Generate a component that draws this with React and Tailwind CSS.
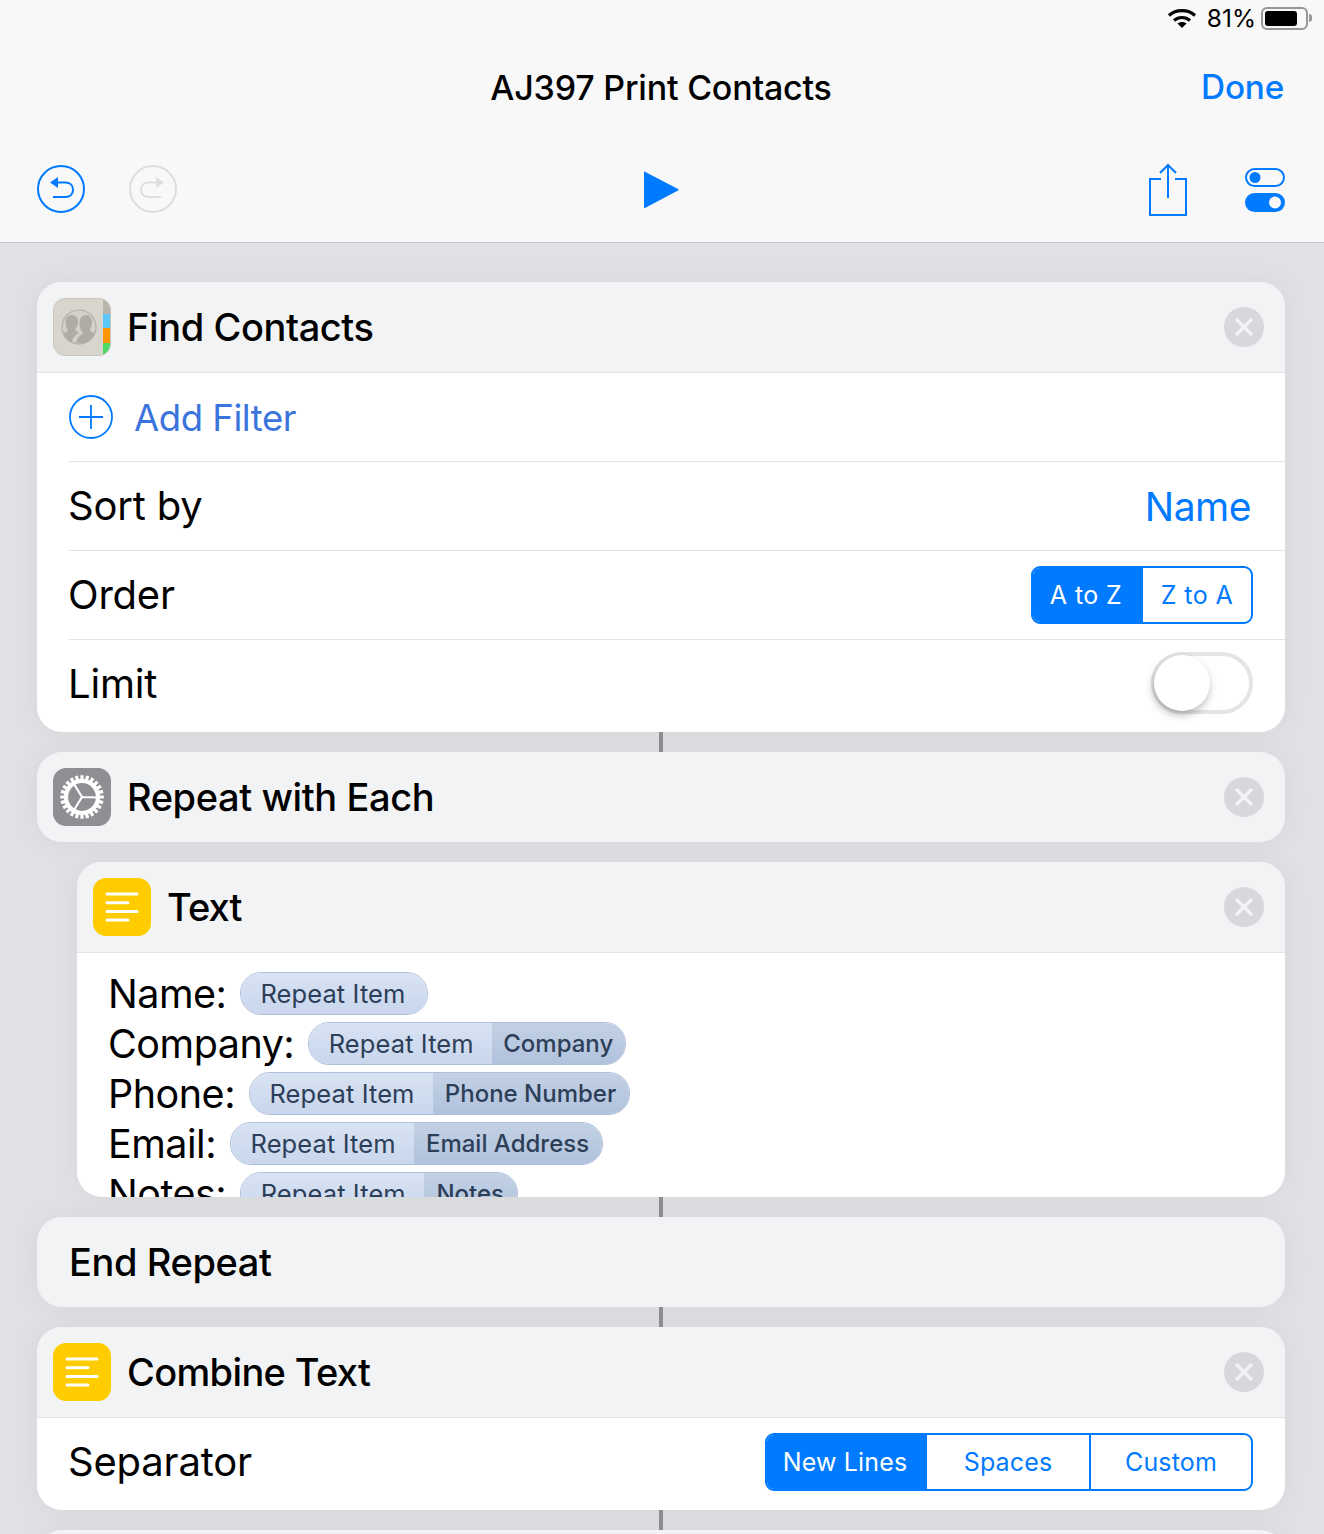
const F = '"Inter", "Liberation Sans", sans-serif';
const CARD_SHADOW = "shadow-[0_0_28px_rgba(0,0,0,0.05)]";

function Close() {
  return (
    <div className="w-10 h-10 rounded-full bg-[#d6d8dc] flex items-center justify-center shrink-0">
      <svg width="20" height="20" viewBox="0 0 20 20"><path d="M3 3L17 17M17 3L3 17" stroke="#f2f3f5" strokeWidth="3.4" strokeLinecap="round" /></svg>
    </div>
  );
}

function TextIcon() {
  return (
    <div className="w-[58px] h-[58px] rounded-[13px] bg-[#ffcc00] shrink-0 flex items-center justify-center">
      <svg width="34" height="32" viewBox="0 0 34 32" fill="none" stroke="#fff" strokeWidth="3" strokeLinecap="round">
        <path d="M2 3H32M2 11.700H23M2 20.400H32M2 29H23" />
      </svg>
    </div>
  );
}

function ContactsIcon() {
  return (
    <div className="w-[58px] h-[58px] rounded-[12px] overflow-hidden shrink-0 flex border border-[#c9c6bd] bg-[#d8d5cc]">
      <div className="flex-1 flex items-center justify-center">
        <svg width="38" height="38" viewBox="0 0 38 38">
          <defs><clipPath id="cc"><circle cx="19" cy="19" r="17" /></clipPath></defs>
          <circle cx="19" cy="19" r="17" fill="#d3d0c8" stroke="#b3afa7" strokeWidth="1.2" />
          <g clipPath="url(#cc)" fill="#b0aca4">
            <path d="M12 7c4 0 6 3 6 7 0 3-1 5-2.500 7 0 2 1.500 2.500 4 3.500-4 2-7 5-7.500 10H0c0-6 2-9 8-11.500 0-1-.5-1.500-1-2.500-1-2-1.500-4-1.500-6.500C5.500 10 8 7 12 7z" />
            <path d="M26 7c4 0 6 3 6 7 0 3-.5 5-2 7.500 0 2 2 2.500 5 4l3 9.500H16c.5-4 2.500-7 6.500-9 0-1 0-2-.5-2.500-2-2-2.500-5-2.500-8C19.500 10 22 7 26 7z" />
          </g>
        </svg>
      </div>
      <div className="w-[7px] flex flex-col bg-[#b8b5ac] shrink-0">
        <div className="h-[15px]" />
        <div className="h-[14px] bg-[#5ac8fa]" />
        <div className="h-[15px] bg-[#ff9500]" />
        <div className="flex-1 bg-[#4cd964]" />
      </div>
    </div>
  );
}

function GearIcon() {
  const teeth = [];
  for (let i = 0; i < 24; i++) teeth.push(i * 15);
  return (
    <div className="w-[58px] h-[58px] rounded-[13px] bg-[#8e8e93] shrink-0 flex items-center justify-center">
      <svg width="46" height="46" viewBox="0 0 46 46" fill="none" stroke="#fff">
        <circle cx="23" cy="23" r="16" strokeWidth="4.2" />
        {teeth.map((a) => (
          <path key={a} d="M23 1.200V8" strokeWidth="3.200" transform={`rotate(${a} 23 23)`} />
        ))}
        <path d="M23 23L38 23.500M23 23L15 10M23 23L15 36" strokeWidth="2.200" />
      </svg>
    </div>
  );
}

function CardHeader({ icon, title, close = true, bordered = true, tracking = "tracking-[-0.4px]" }) {
  return (
    <div className={`bg-[#f2f3f5] flex items-center pl-4 pr-[21px] ${bordered ? "h-[91px] border-b border-[#e2e3e5]" : "h-[90px]"}`}>
      {icon}
      <div className={`flex-1 ml-[16px] text-[38px] font-medium text-black leading-none ${tracking}`}>{title}</div>
      {close && <Close />}
    </div>
  );
}

function Row({ label, children, last, h = "h-[89px]", pad = "" }) {
  return (
    <div className={`ml-8 pr-8 flex items-center justify-between ${h} ${pad} ${last ? "" : "border-b border-[#e2e2e4]"}`}>
      <div className="-ml-px text-[40px] text-black tracking-[-0.2px] leading-none">{label}</div>
      {children}
    </div>
  );
}

function Connector() {
  return (
    <div className="h-5 flex justify-center">
      <div className="w-1 h-full bg-[#8e8e93]" />
    </div>
  );
}

function Seg({ items, w, textClass }) {
  return (
    <div className="flex h-[58px] border-2 border-[#007aff] rounded-[9px] overflow-hidden bg-white">
      {items.map((t, i) => (
        <div
          key={t}
          style={{ width: w[i] }}
          className={`flex items-center justify-center text-[25px] leading-none ${textClass} ${i === 0 ? "bg-[#007aff] text-white pr-[4px]" : "text-[#007aff]"} ${i > 1 ? "border-l-2 border-[#007aff]" : ""}`}
        >
          {t}
        </div>
      ))}
    </div>
  );
}

function Line({ label, second, sw }) {
  return (
    <div className="h-[50px] flex items-center">
      <span className="mt-[3px] text-[39.500px] text-black tracking-[-0.5px] leading-none">{label}</span>
      <div className="ml-[13.500px] h-[43px] flex rounded-[21px] border border-[#afc0dc] overflow-hidden leading-none text-[#2d3e58]">
        <div className={`h-full flex items-center justify-center bg-gradient-to-b from-[#d8e3f3] to-[#c9d6ec] text-[25.500px] tracking-[0.1px] ${second ? "w-[183px] pl-[2px]" : "w-[186px] pr-[2px]"}`}>
          Repeat Item
        </div>
        {second && (
          <div className="h-full flex items-center justify-center bg-gradient-to-b from-[#c3d1e4] to-[#b0c2dc] text-[24px] font-medium" style={{ width: sw }}>
            {second}
          </div>
        )}
      </div>
    </div>
  );
}

export default function App() {
  return (
    <div className="w-[1324px] h-[1534px] overflow-hidden bg-[#e0e1e5]" style={{ fontFamily: F }}>
      <header className="h-[243px] bg-[#f8f8f8] border-b border-[#c5c5c7] flex flex-col">
        <div className="h-9 flex items-center justify-end pr-3">
          <svg width="30" height="22" viewBox="0 0 30 22" className="mr-[10px]" fill="none" stroke="#000" strokeWidth="3.200">
            <path d="M2 8.500C9 2 21 2 28 8.500" />
            <path d="M7 13.500C11.500 9.500 18.500 9.500 23 13.500" />
            <path d="M15 21L10.500 16.500C13 14.500 17 14.500 19.500 16.500Z" fill="#000" stroke="none" />
          </svg>
          <span className="text-[24.500px] text-black leading-none mr-[5px]">81%</span>
          <div className="w-[47px] h-[23px] rounded-[6px] border-2 border-[#979797] p-[2px] flex">
            <div className="w-[32px] h-full bg-black rounded-[3px]" />
          </div>
          <div className="w-[3px] h-[8px] bg-[#979797] rounded-r-sm ml-[1px]" />
        </div>
        <div className="h-[104px] flex items-center relative justify-center pr-[2px]">
          <div className="text-[34px] font-medium text-black tracking-[-0.2px] leading-none">AJ397 Print Contacts</div>
          <div className="absolute right-10 top-[35px] text-[33.300px] font-medium text-[#007aff] leading-none tracking-[-0.2px]">Done</div>
        </div>
        <div className="flex-1 flex items-center pl-[37px] pr-[39px] pb-[4px]">
          <div className="flex-1 flex gap-11">
            <svg width="48" height="48" viewBox="0 0 48 48" fill="none" stroke="#007aff" strokeWidth="2">
              <circle cx="24" cy="24" r="23" />
              <path d="M16 32H28.500C33 32 36 29 36 24.750C36 20.500 33 17.500 28.500 17.500H18" />
              <path d="M13 17.500L21 12V23Z" fill="#007aff" stroke="none" />
            </svg>
            <svg width="48" height="48" viewBox="0 0 48 48" fill="none" stroke="#dedede" strokeWidth="2">
              <circle cx="24" cy="24" r="23" />
              <path d="M32 32H19.500C15 32 12 29 12 24.750C12 20.500 15 17.500 19.500 17.500H30" />
              <path d="M35 17.500L27 12V23Z" fill="#dedede" stroke="none" />
            </svg>
          </div>
          <svg width="36" height="39" viewBox="0 0 36 39">
            <path d="M1.500 1.500C1 1 1 1 1 2V37C1 38 1 38 2 38L35 20.500C36 20 36 19.500 35 19Z" fill="#007aff" />
          </svg>
          <div className="flex-1 flex items-center justify-end gap-[58px] mt-[2px]">
            <svg width="38" height="54" viewBox="0 0 38 54" fill="none" stroke="#007aff" strokeWidth="2">
              <path d="M12 16H1V52H37V16H26" />
              <path d="M19 35V2M11 10L19 2L27 10" />
            </svg>
            <svg width="40" height="44" viewBox="0 0 40 44" fill="none">
              <rect x="1" y="1" width="38" height="17" rx="8.500" stroke="#007aff" strokeWidth="2" />
              <circle cx="10" cy="9.500" r="5.500" fill="#007aff" />
              <rect y="25" width="40" height="19" rx="9.500" fill="#007aff" />
              <circle cx="30" cy="34.500" r="6" fill="#f8f8f8" />
            </svg>
          </div>
        </div>
      </header>

      <main className="pt-[39px] pl-[37px] pr-[39px] flex flex-col">
        <section className={`rounded-[25px] overflow-hidden bg-white ${CARD_SHADOW}`}>
          <CardHeader icon={<ContactsIcon />} title="Find Contacts" />
          <div className="ml-8 flex items-center h-[89px] border-b border-[#e2e2e4]">
            <svg width="44" height="44" viewBox="0 0 44 44" fill="none" stroke="#007aff" strokeWidth="1.800">
              <circle cx="22" cy="22" r="21" />
              <path d="M22 10V34M10 22H34" />
            </svg>
            <span className="ml-[21px] mt-[3px] text-[36.500px] text-[#3a74dc] leading-none tracking-[-0.45px]">Add Filter</span>
          </div>
          <Row label="Sort by">
            <span className="mr-[2px] text-[39px] text-[#007aff] tracking-[-0.5px] leading-none">Name</span>
          </Row>
          <Row label="Order">
            <Seg items={["A to Z", "Z to A"]} w={[110, 108]} textClass="tracking-[0.4px]" />
          </Row>
          <Row label="Limit" last h="h-[92px]" pad="pb-[5px]">
            <div className="w-[102px] h-[62px] -mt-[1px] rounded-full border-[4px] border-[#e5e5e5] relative bg-white">
              <div className="absolute -left-[1px] -top-[1px] w-14 h-14 rounded-full bg-white shadow-[-1px_4px_8px_rgba(0,0,0,0.28)]" />
            </div>
          </Row>
        </section>
        <Connector />
        <section className={`rounded-[25px] overflow-hidden ${CARD_SHADOW}`}>
          <CardHeader icon={<GearIcon />} title="Repeat with Each" bordered={false} />
        </section>
        <div className="h-5" />
        <section className={`ml-10 h-[335px] rounded-[25px] overflow-hidden bg-white ${CARD_SHADOW}`}>
          <CardHeader icon={<TextIcon />} title="Text" tracking="tracking-[-0.9px]" />
          <div className="pt-[15.500px] pl-[31px]">
            <Line label="Name:" />
            <Line label="Company:" second="Company" sw={133} />
            <Line label="Phone:" second="Phone Number" sw={196} />
            <Line label="Email:" second="Email Address" sw={188} />
            <Line label="Notes:" second="Notes" sw={93} />
          </div>
        </section>
        <Connector />
        <section className={`rounded-[25px] overflow-hidden ${CARD_SHADOW}`}>
          <CardHeader title="End Repeat" close={false} bordered={false} />
        </section>
        <Connector />
        <section className={`rounded-[25px] overflow-hidden bg-white ${CARD_SHADOW}`}>
          <CardHeader icon={<TextIcon />} title="Combine Text" tracking="tracking-[-0.65px]" />
          <Row label="Separator" last h="h-[92px]" pad="pb-[4px]">
            <Seg items={["New Lines", "Spaces", "Custom"]} w={[160, 162, 162]} textClass="tracking-[0.15px]" />
          </Row>
        </section>
        <Connector />
        <section className={`rounded-[25px] h-[90px] bg-[#f2f3f5] ${CARD_SHADOW}`} />
      </main>
    </div>
  );
}
